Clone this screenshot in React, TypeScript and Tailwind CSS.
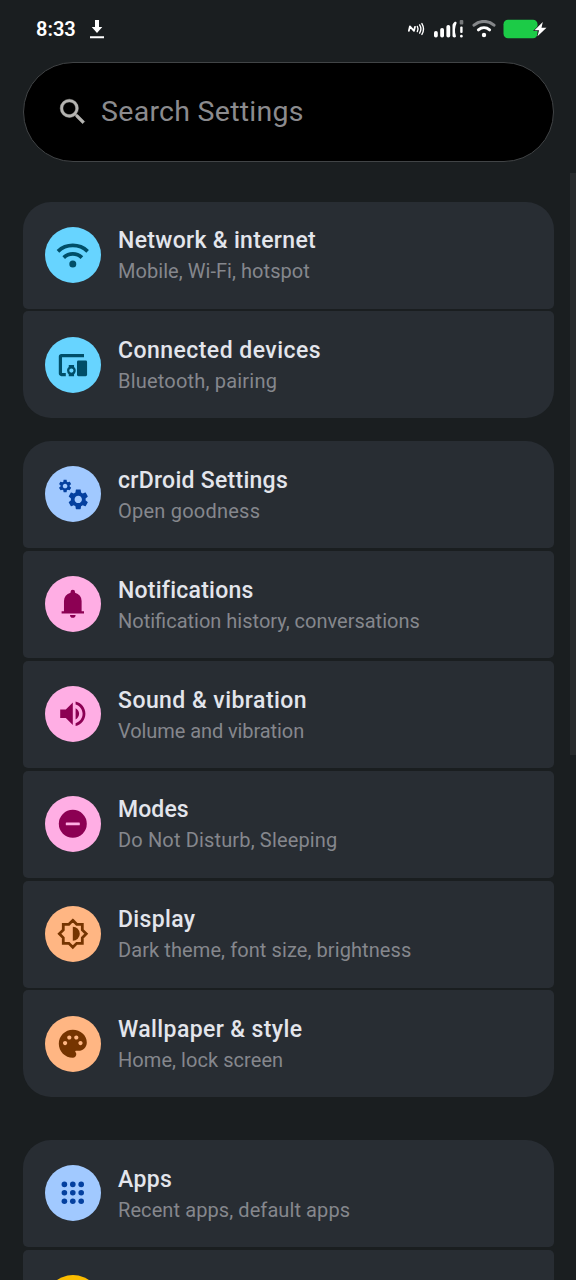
import type { ReactNode } from "react";
import clsx from "clsx";

const gear =
  "M19.14 12.94c.04-.3.06-.61.06-.94 0-.32-.02-.64-.07-.94l2.03-1.58c.18-.14.23-.41.12-.61l-1.92-3.32c-.12-.22-.37-.29-.59-.22l-2.39.96c-.5-.38-1.03-.7-1.62-.94l-.36-2.54c-.04-.24-.24-.41-.48-.41h-3.84c-.24 0-.43.17-.47.41l-.36 2.54c-.59.24-1.13.57-1.62.94l-2.39-.96c-.22-.08-.47 0-.59.22L2.74 8.87c-.12.21-.08.47.12.61l2.03 1.58c-.05.3-.09.63-.09.94s.02.64.07.94l-2.03 1.58c-.18.14-.23.41-.12.61l1.92 3.32c.12.22.37.29.59.22l2.39-.96c.5.38 1.03.7 1.62.94l.36 2.54c.05.24.24.41.48.41h3.84c.24 0 .44-.17.47-.41l.36-2.54c.59-.24 1.13-.56 1.62-.94l2.39.96c.22.08.47 0 .59-.22l1.92-3.32c.12-.22.07-.47-.12-.61l-2.01-1.58zM12 15.6c-1.98 0-3.6-1.62-3.6-3.6s1.62-3.6 3.6-3.6 3.6 1.62 3.6 3.6-1.62 3.6-3.6 3.6z";

const icons = {
  wifi: (
    <>
      <g fill="none" stroke="currentColor" strokeWidth="2.7">
        <path d="M1.4 9.5a15.6 15.6 0 0 1 21.2 0" />
        <path d="M5.5 14a9.4 9.4 0 0 1 13 0" />
      </g>
      <circle cx="12" cy="18.5" r="2.5" />
    </>
  ),
  devices: (
    <>
      <path d="M4.3 6.6H20V4.3H3.8C2.8 4.3 2 5.1 2 6.1v12.2c0 1 .8 1.8 1.8 1.8H7v-2.3H4.3z" />
      <path
        fillRule="evenodd"
        d="M9.1 12.1h3.8v1.5c.8.6 1.2 1.4 1.2 2.5s-.4 2-1.2 2.6v1.4H9.1v-1.4a3.4 3.4 0 0 1-1.2-2.6c0-1.1.4-1.9 1.2-2.5zm1.9 2.5a1.5 1.5 0 1 0 0 3 1.5 1.5 0 0 0 0-3z"
      />
      <rect x="15" y="9" width="7.2" height="11.1" rx="1" />
    </>
  ),
  gears: (
    <>
      <path d={gear} transform="translate(7.14 7.24) scale(.73)" />
      <path d={gear} transform="translate(.98 .88) scale(.46)" />
    </>
  ),
  bell: (
    <path d="M4 19v-1.7h1.7V10a6.3 6.3 0 0 1 4.7-5.9v-.5a1.6 1.6 0 0 1 3.2 0v.5a6.3 6.3 0 0 1 4.7 5.9v7.3H20V19zM12 22a2 2 0 0 1-2-2h4a2 2 0 0 1-2 2z" />
  ),
  volume: (
    <path d="M3 9v6h4l5 5V4L7 9zM16.5 12c0-1.77-1.02-3.29-2.5-4.03v8.05c1.48-.73 2.5-2.25 2.5-4.02zM14 3.23v2.06c2.89.86 5 3.54 5 6.71s-2.11 5.85-5 6.71v2.06c4.01-.91 7-4.49 7-8.77s-2.99-7.86-7-8.77z" />
  ),
  modes: (
    <>
      <circle cx="12" cy="12" r="10" />
      <rect x="7" y="11" width="10" height="2" rx=".4" className="fill-[#ffaee4]" />
    </>
  ),
  display: (
    <>
      <path
        d="M12 2.4l2.8 2.8h4v4l2.8 2.8-2.8 2.8v4h-4L12 21.6l-2.8-2.8h-4v-4L2.4 12l2.8-2.8v-4h4z"
        fill="none"
        stroke="currentColor"
        strokeWidth="2"
      />
      <path d="M12 7a5 5 0 0 1 0 10z" />
    </>
  ),
  palette: (
    <path d="M12 2C6.49 2 2 6.49 2 12s4.49 10 10 10c1.38 0 2.5-1.12 2.5-2.5 0-.61-.23-1.2-.64-1.67-.08-.1-.13-.21-.13-.33 0-.28.22-.5.5-.5H16c3.31 0 6-2.69 6-6 0-4.96-4.49-9-10-9zm-5.5 11c-.83 0-1.5-.67-1.5-1.5S5.67 10 6.5 10s1.5.67 1.5 1.5S7.33 13 6.5 13zm3-4C8.67 9 8 8.33 8 7.5S8.67 6 9.5 6s1.5.67 1.5 1.5S10.33 9 9.5 9zm5 0c-.83 0-1.5-.67-1.5-1.5S13.67 6 14.5 6s1.5.67 1.5 1.5S15.33 9 14.5 9zm3 4c-.83 0-1.5-.67-1.5-1.5s.67-1.5 1.5-1.5 1.5.67 1.5 1.5-.67 1.5-1.5 1.5z" />
  ),
  apps: (
    <>
      {[6, 12, 18].flatMap((y) =>
        [6, 12, 18].map((x) => <circle key={`${x}-${y}`} cx={x} cy={y} r="2" />)
      )}
    </>
  ),
  storage: <path d="M3 20h18v-4H3zM3 4v4h18V4zM3 14h18v-4H3z" />,
};

type Item = {
  icon: keyof typeof icons;
  tone: string;
  title: string;
  titleTracking: string;
  note: string;
  noteTracking: string;
};

const cyan = "bg-[#67d4ff] text-[#004e68]";
const blue = "bg-[#a1c9ff] text-[#04409f]";
const pink = "bg-[#ffaee4] text-[#8c0053]";
const orange = "bg-[#ffb683] text-[#753400]";
const yellow = "bg-[#fcbd00] text-[#5c4200]";

const groups: { spacing: string; items: Item[] }[] = [
  {
    spacing: "mt-[40px]",
    items: [
      { icon: "wifi", tone: cyan, title: "Network & internet", titleTracking: "tracking-[0.32px]", note: "Mobile, Wi-Fi, hotspot", noteTracking: "tracking-[0.05px]" },
      { icon: "devices", tone: cyan, title: "Connected devices", titleTracking: "tracking-[0.46px]", note: "Bluetooth, pairing", noteTracking: "tracking-[0.2px]" },
    ],
  },
  {
    spacing: "mt-[22.6px]",
    items: [
      { icon: "gears", tone: blue, title: "crDroid Settings", titleTracking: "tracking-[0.27px]", note: "Open goodness", noteTracking: "tracking-[0.23px]" },
      { icon: "bell", tone: pink, title: "Notifications", titleTracking: "tracking-[0.24px]", note: "Notification history, conversations", noteTracking: "tracking-normal" },
      { icon: "volume", tone: pink, title: "Sound & vibration", titleTracking: "tracking-[0.45px]", note: "Volume and vibration", noteTracking: "tracking-[-0.08px]" },
      { icon: "modes", tone: pink, title: "Modes", titleTracking: "tracking-[0.1px]", note: "Do Not Disturb, Sleeping", noteTracking: "tracking-[0.15px]" },
      { icon: "display", tone: orange, title: "Display", titleTracking: "tracking-[0.34px]", note: "Dark theme, font size, brightness", noteTracking: "tracking-[0.09px]" },
      { icon: "palette", tone: orange, title: "Wallpaper & style", titleTracking: "tracking-[0.39px]", note: "Home, lock screen", noteTracking: "tracking-[0.06px]" },
    ],
  },
  {
    spacing: "mt-[42.4px]",
    items: [
      { icon: "apps", tone: blue, title: "Apps", titleTracking: "tracking-[0.35px]", note: "Recent apps, default apps", noteTracking: "tracking-[0.09px]" },
      { icon: "storage", tone: yellow, title: "Storage", titleTracking: "tracking-[0.3px]", note: "", noteTracking: "tracking-normal" },
    ],
  },
];

function Icon({ children, className }: { children: ReactNode; className?: string }) {
  return (
    <svg viewBox="0 0 24 24" fill="currentColor" className={clsx("size-[33.6px] shrink-0", className)}>
      {children}
    </svg>
  );
}

function StatusBar() {
  return (
    <header className="flex h-[61.5px] shrink-0 items-start justify-between pt-[16.5px] pr-[29px] pl-[36px] text-white">
      <div className="flex items-start">
        <span className="w-[54px] text-[20px] leading-[24px] font-semibold">8:33</span>
        <svg viewBox="0 0 14 19" fill="currentColor" className="mt-[3px] h-[19px] w-[14px]">
          <path d="M5 0h4v7h3.3L7 13 1.7 7H5zM0 16.3h14v1.9H0z" />
        </svg>
      </div>
      <div className="flex items-start">
        <svg viewBox="0 0 18 16" className="mt-[4.5px] h-[16px] w-[18px]" fill="none" stroke="currentColor" strokeLinecap="round">
          <path d="M.9 9.8L1.9 5.4 6 9.9 7 5.8" strokeWidth="1.8" strokeLinejoin="round" />
          <path d="M9.300 5.400q1.500 2.600 0 5.200M11.600 3.900q2.600 4.100 0 8.200M13.900 2.600q3.200 5.400 0 10.800" strokeWidth="1.400" />
        </svg>
        <svg viewBox="0 0 31 18" className="mt-[3.5px] ml-[7px] h-[18px] w-[31px]" fill="currentColor">
          <rect x="1" y="11" width="3.8" height="6.5" rx="1.8" />
          <rect x="7.2" y="8" width="3.8" height="9.5" rx="1.8" />
          <rect x="13.4" y="5" width="3.8" height="12.5" rx="1.8" />
          <path d="M21.300 2.300c.9-.8 2.300-.6 2.300.8-1.600 3.800-2.400 8.200-.6 13.300-.8 1.600-3.500 1.300-3.500-.6V5.500c0-1.300.8-2.200 1.800-3.200z" />
          <rect x="26.7" y="0" width="3.6" height="4.5" rx="1" className="fill-[#77797b]" />
          <rect x="27.2" y="6.5" width="2.4" height="6.5" rx="1" />
          <rect x="27.1" y="14.7" width="2.6" height="2.8" rx="1.2" />
        </svg>
        <svg viewBox="0 0 24 18" className="mt-[3.5px] ml-[7.5px] h-[18px] w-[24px]" fill="none" strokeLinecap="round">
          <path d="M2 5.2a15 15 0 0 1 20 0" className="stroke-[#85878a]" strokeWidth="3" />
          <path d="M6.4 9.8a8.8 8.8 0 0 1 11.2 0" stroke="currentColor" strokeWidth="3" />
          <circle cx="12" cy="15" r="2.2" fill="currentColor" />
        </svg>
        <svg viewBox="0 0 44 20" className="mt-[2.5px] ml-[7.5px] h-[20px] w-[44px]">
          <rect x="0.5" y="0.8" width="34" height="18.4" rx="4.5" className="fill-[#1ccb47]" />
          <path
            d="M39.8 3L31.5 11.3h4.6l-1.6 6L43.5 8.7h-5z"
            fill="currentColor"
            className="stroke-[#1b1e20]"
            strokeWidth="1.2"
            paintOrder="stroke"
          />
        </svg>
      </div>
    </header>
  );
}

function Row({ item, first, last }: { item: Item; first: boolean; last: boolean }) {
  return (
    <li
      className={clsx(
        "flex h-[107px] shrink-0 items-center gap-[17.5px] bg-[#282d33] pb-[0.4px] pl-[22px]",
        first ? "rounded-t-[28px]" : "rounded-t-[5px]",
        last ? "rounded-b-[28px]" : "rounded-b-[5px]"
      )}
    >
      <span className={clsx("flex size-[56px] shrink-0 items-center justify-center rounded-full", item.tone)}>
        <Icon>{icons[item.icon]}</Icon>
      </span>
      <span className="flex flex-col pt-[3px] whitespace-nowrap">
        <span className={clsx("text-[23px] leading-[31px] font-medium text-[#e3e5ec]", item.titleTracking)}>
          {item.title}
        </span>
        <span className={clsx("h-[31px] text-[20px] leading-[31px] text-[#85878d]", item.noteTracking)}>{item.note}</span>
      </span>
    </li>
  );
}

export default function App() {
  return (
    <div className="relative flex h-[1280px] w-[576px] flex-col overflow-hidden bg-[#1a1e20] font-['Roboto','Liberation_Sans',sans-serif]">
      <StatusBar />
      <main className="flex flex-col px-[22.5px]">
        <div className="flex h-[100px] items-center rounded-full border-[1.5px] border-[#414446] bg-black pl-[32px]">
          <Icon className="text-[#b5b4b1]">
            <path
              d="M15.5 14h-.79l-.28-.27A6.471 6.471 0 0 0 16 9.5 6.5 6.5 0 1 0 9.5 16c1.61 0 3.09-.59 4.23-1.57l.27.28v.79l5 4.99L20.49 19l-4.99-5zm-6 0C7.01 14 5 11.99 5 9.5S7.01 5 9.5 5 14 7.01 14 9.5 11.99 14 9.5 14z"
              stroke="currentColor"
              strokeWidth=".3"
            />
          </Icon>
          <span className="ml-[12px] text-[28.5px] leading-[36px] tracking-[0.27px] text-[#8b8b8e]">
            Search Settings
          </span>
        </div>
        {groups.map((group, g) => (
          <ul key={g} className={clsx("flex flex-col gap-[2.9px]", group.spacing)}>
            {group.items.map((item, i) => (
              <Row key={item.title} item={item} first={i === 0} last={i === group.items.length - 1} />
            ))}
          </ul>
        ))}
      </main>
      {/* scroll thumb */}
      <div className="absolute top-[173px] right-0 h-[582px] w-[6px] bg-[#282b2d]" />
    </div>
  );
}
